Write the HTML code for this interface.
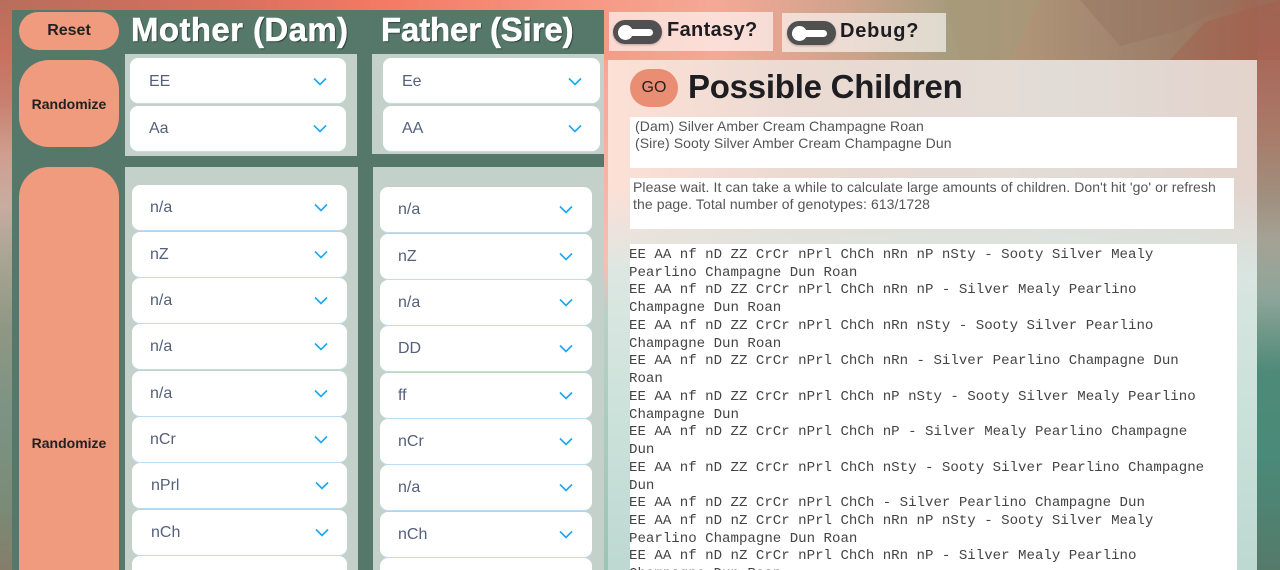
<!DOCTYPE html>
<html><head><meta charset="utf-8"><style>
html,body{margin:0;padding:0;width:1280px;height:570px;overflow:hidden;font-family:"Liberation Sans",sans-serif;background:#8a9a8a}
#root{position:relative;width:1280px;height:570px;overflow:hidden}
.a{position:absolute}
.sel{position:absolute;background:#fff;border-radius:8px;box-shadow:0 1px 0 #bcdcf2;color:#55607a;font-size:16px;line-height:45px;height:45px;box-sizing:border-box;padding-left:18px}
.sel svg{position:absolute;right:19px;top:18px}
.top{padding-left:19px;line-height:46px}
.btn{position:absolute;left:19px;width:100px;background:#f09a7e;color:#222;font-weight:bold;font-size:14px;text-align:center}
.h{position:absolute;color:#fff;font-weight:bold;font-size:33px;top:11px;line-height:38px;text-shadow:1px 1px 1px #233;white-space:nowrap;-webkit-text-stroke:.5px #fff}
.tgl{position:absolute;background:rgba(255,255,255,.62);height:39px;width:164px;font-weight:bold;font-size:20px;letter-spacing:.35px;line-height:37px;color:#1c1c22}
.pill{position:absolute;left:4px;top:8px;width:49px;height:24px;border-radius:12px;background:#505050;box-shadow:0 1px 2px rgba(0,0,0,.25)}
.pill i{position:absolute;left:5px;top:9px;width:35px;height:7px;border-radius:4px;background:#fff}
.pill b{position:absolute;left:5px;top:5px;width:15px;height:15px;border-radius:50%;background:#fff}
.w{position:absolute;background:#fff;color:#555;font-size:14px;line-height:17px;letter-spacing:.085px;white-space:nowrap}
pre{margin:0;font-family:"Liberation Mono",monospace;font-size:14.1px;line-height:17.74px;color:#444;white-space:pre}
</style></head><body><div id="root">
<svg class="a" style="left:0;top:0" width="1280" height="570" viewBox="0 0 1280 570">
<defs>
<linearGradient id="t" x1="0" y1="0" x2="1" y2="0">
<stop offset="0" stop-color="#b86e5c"/><stop offset=".18" stop-color="#d8705e"/><stop offset=".3" stop-color="#f47a64"/><stop offset=".47" stop-color="#f69a86"/><stop offset=".56" stop-color="#f4a996"/><stop offset=".66" stop-color="#cfa38c"/><stop offset=".74" stop-color="#a89c7e"/><stop offset=".8" stop-color="#b09478"/><stop offset=".87" stop-color="#a2866e"/><stop offset=".93" stop-color="#9c7a64"/><stop offset="1" stop-color="#a0604e"/>
</linearGradient>
<linearGradient id="l" x1="0" y1="0" x2="0" y2="1">
<stop offset="0" stop-color="#b86e5c"/><stop offset=".09" stop-color="#c9705f"/><stop offset=".18" stop-color="#c88070"/><stop offset=".27" stop-color="#cf9e8e"/><stop offset=".36" stop-color="#c8aca0"/><stop offset=".45" stop-color="#a9a594"/><stop offset=".58" stop-color="#8e9783"/><stop offset=".72" stop-color="#7d9384"/><stop offset=".88" stop-color="#7a8c78"/><stop offset="1" stop-color="#857d68"/>
</linearGradient>
<linearGradient id="r" x1="0" y1="0" x2="0" y2="1">
<stop offset="0" stop-color="#9c6a58"/><stop offset=".1" stop-color="#a9685a"/><stop offset=".23" stop-color="#a97a68"/><stop offset=".35" stop-color="#a0907f"/><stop offset=".42" stop-color="#a5a295"/><stop offset=".52" stop-color="#8fa59a"/><stop offset=".65" stop-color="#4f8a78"/><stop offset=".8" stop-color="#4a8a78"/><stop offset="1" stop-color="#557a6a"/>
</linearGradient>
<linearGradient id="m" x1="0" y1="0" x2="0" y2="1">
<stop offset="0" stop-color="#f8a590"/><stop offset=".4" stop-color="#f4c0b4"/><stop offset=".5" stop-color="#b8d0c8"/><stop offset="1" stop-color="#9cc4b6"/>
</linearGradient>
</defs>
<rect width="1280" height="60" fill="url(#t)"/>
<rect y="0" width="12" height="570" fill="url(#l)"/>
<rect x="1257" y="0" width="23" height="570" fill="url(#r)"/>
<rect x="604" y="60" width="4" height="510" fill="url(#m)"/>
<polygon points="1170,60 1205,22 1280,0 1280,60" fill="#a3604c" opacity=".45"/>
<polygon points="1080,0 1240,0 1180,30 1120,46" fill="#93715c" opacity=".4"/>
<polygon points="945,0 1040,0 1010,60 960,60" fill="#a59a7a" opacity=".6"/>
</svg>
<div class="a" style="left:12px;top:10px;width:592px;height:560px;background:#56786a"></div>
<div class="a" style="left:125px;top:54px;width:232px;height:102px;background:#c4d1ca"></div>
<div class="a" style="left:372px;top:54px;width:232px;height:100px;background:#c4d1ca"></div>
<div class="a" style="left:125px;top:167px;width:233px;height:403px;background:#c4d1ca"></div>
<div class="a" style="left:373px;top:167px;width:231px;height:403px;background:#c4d1ca"></div>
<div class="btn" style="top:12px;height:38px;border-radius:19px;line-height:38px;font-size:16px">Reset</div>
<div class="btn" style="top:60px;height:87px;border-radius:30px;line-height:88px">Randomize</div>
<div class="btn" style="top:167px;height:403px;border-radius:30px 30px 0 0"><span class="a" style="left:0;width:100px;top:268px;line-height:17px">Randomize</span></div>
<div class="h" style="left:131px;letter-spacing:.4px">Mother (Dam)</div>
<div class="h" style="left:381px;letter-spacing:-.15px">Father (Sire)</div>
<div class="sel top" style="left:130px;top:58px;width:216px;line-height:47px">EE<svg style="top:19px" width="14" height="9" viewBox="0 0 14 9"><path d="M1 1.5 7 7.5 13 1.5" fill="none" stroke="#1aa7ee" stroke-width="1.6"/></svg></div>
<div class="sel top" style="left:130px;top:106px;width:216px">Aa<svg width="14" height="9" viewBox="0 0 14 9"><path d="M1 1.5 7 7.5 13 1.5" fill="none" stroke="#1aa7ee" stroke-width="1.6"/></svg></div>
<div class="sel top" style="left:383px;top:58px;width:217px;line-height:47px">Ee<svg style="right:18px;top:19px" width="14" height="9" viewBox="0 0 14 9"><path d="M1 1.5 7 7.5 13 1.5" fill="none" stroke="#1aa7ee" stroke-width="1.6"/></svg></div>
<div class="sel top" style="left:383px;top:106px;width:217px">AA<svg style="right:18px" width="14" height="9" viewBox="0 0 14 9"><path d="M1 1.5 7 7.5 13 1.5" fill="none" stroke="#1aa7ee" stroke-width="1.6"/></svg></div>
<div class="sel" style="left:132px;top:185px;width:215px">n/a<svg width="14" height="9" viewBox="0 0 14 9"><path d="M1 1.5 7 7.5 13 1.5" fill="none" stroke="#1aa7ee" stroke-width="1.6"/></svg></div>
<div class="sel" style="left:132px;top:232px;width:215px">nZ<svg width="14" height="9" viewBox="0 0 14 9"><path d="M1 1.5 7 7.5 13 1.5" fill="none" stroke="#1aa7ee" stroke-width="1.6"/></svg></div>
<div class="sel" style="left:132px;top:278px;width:215px">n/a<svg width="14" height="9" viewBox="0 0 14 9"><path d="M1 1.5 7 7.5 13 1.5" fill="none" stroke="#1aa7ee" stroke-width="1.6"/></svg></div>
<div class="sel" style="left:132px;top:324px;width:215px">n/a<svg width="14" height="9" viewBox="0 0 14 9"><path d="M1 1.5 7 7.5 13 1.5" fill="none" stroke="#1aa7ee" stroke-width="1.6"/></svg></div>
<div class="sel" style="left:132px;top:371px;width:215px">n/a<svg width="14" height="9" viewBox="0 0 14 9"><path d="M1 1.5 7 7.5 13 1.5" fill="none" stroke="#1aa7ee" stroke-width="1.6"/></svg></div>
<div class="sel" style="left:132px;top:417px;width:215px">nCr<svg width="14" height="9" viewBox="0 0 14 9"><path d="M1 1.5 7 7.5 13 1.5" fill="none" stroke="#1aa7ee" stroke-width="1.6"/></svg></div>
<div class="sel" style="left:132px;top:463px;width:215px;padding-left:19px">nPrl<svg style="right:18px" width="14" height="9" viewBox="0 0 14 9"><path d="M1 1.5 7 7.5 13 1.5" fill="none" stroke="#1aa7ee" stroke-width="1.6"/></svg></div>
<div class="sel" style="left:132px;top:510px;width:215px;padding-left:19px">nCh<svg style="right:18px" width="14" height="9" viewBox="0 0 14 9"><path d="M1 1.5 7 7.5 13 1.5" fill="none" stroke="#1aa7ee" stroke-width="1.6"/></svg></div>
<div class="sel" style="left:132px;top:556px;width:215px;height:14px;border-radius:8px 8px 0 0;box-shadow:none"></div>
<div class="sel" style="left:380px;top:187px;width:212px">n/a<svg width="14" height="9" viewBox="0 0 14 9"><path d="M1 1.5 7 7.5 13 1.5" fill="none" stroke="#1aa7ee" stroke-width="1.6"/></svg></div>
<div class="sel" style="left:380px;top:234px;width:212px">nZ<svg width="14" height="9" viewBox="0 0 14 9"><path d="M1 1.5 7 7.5 13 1.5" fill="none" stroke="#1aa7ee" stroke-width="1.6"/></svg></div>
<div class="sel" style="left:380px;top:280px;width:212px">n/a<svg width="14" height="9" viewBox="0 0 14 9"><path d="M1 1.5 7 7.5 13 1.5" fill="none" stroke="#1aa7ee" stroke-width="1.6"/></svg></div>
<div class="sel" style="left:380px;top:326px;width:212px">DD<svg width="14" height="9" viewBox="0 0 14 9"><path d="M1 1.5 7 7.5 13 1.5" fill="none" stroke="#1aa7ee" stroke-width="1.6"/></svg></div>
<div class="sel" style="left:380px;top:373px;width:212px">ff<svg width="14" height="9" viewBox="0 0 14 9"><path d="M1 1.5 7 7.5 13 1.5" fill="none" stroke="#1aa7ee" stroke-width="1.6"/></svg></div>
<div class="sel" style="left:380px;top:419px;width:212px">nCr<svg width="14" height="9" viewBox="0 0 14 9"><path d="M1 1.5 7 7.5 13 1.5" fill="none" stroke="#1aa7ee" stroke-width="1.6"/></svg></div>
<div class="sel" style="left:380px;top:465px;width:212px">n/a<svg width="14" height="9" viewBox="0 0 14 9"><path d="M1 1.5 7 7.5 13 1.5" fill="none" stroke="#1aa7ee" stroke-width="1.6"/></svg></div>
<div class="sel" style="left:380px;top:512px;width:212px">nCh<svg width="14" height="9" viewBox="0 0 14 9"><path d="M1 1.5 7 7.5 13 1.5" fill="none" stroke="#1aa7ee" stroke-width="1.6"/></svg></div>
<div class="sel" style="left:380px;top:558px;width:212px;height:12px;border-radius:8px 8px 0 0;box-shadow:none"></div>
<div class="tgl" style="left:609px;top:12px"><div class="pill"><i></i><b></b></div><span class="a" style="left:58px;top:0">Fantasy?</span></div>
<div class="tgl" style="left:782px;top:13px"><div class="pill" style="left:5px"><i></i><b></b></div><span class="a" style="left:58px;top:0;letter-spacing:.8px">Debug?</span></div>
<div class="a" style="left:608px;top:60px;width:649px;height:510px;background:linear-gradient(to bottom,rgba(205,228,222,0) 25%,rgba(215,232,228,.85) 42%,rgba(200,226,218,.95) 70%,rgba(190,216,210,1) 100%),linear-gradient(to right,#fde0d6 0,#eadad2 30%,#e2dcd6 70%,#e3d3cc 100%)"></div>
<div class="a" style="left:630px;top:69px;width:48px;height:38px;border-radius:19px;background:#e98e72;color:#222;font-size:16px;text-align:center;line-height:38px">GO</div>
<div class="a" style="left:688px;top:68px;font-size:33px;font-weight:bold;line-height:38px;color:#1d1d22;letter-spacing:-.25px;white-space:nowrap">Possible Children</div>
<div class="w" style="left:630px;top:117px;width:602px;height:51px;padding-left:5px"><div style="padding-top:1px">(Dam) Silver Amber Cream Champagne Roan<br>(Sire) Sooty Silver Amber Cream Champagne Dun</div></div>
<div class="w" style="left:630px;top:178px;width:601px;height:51px;padding-left:3px"><div style="padding-top:1px">Please wait. It can take a while to calculate large amounts of children. Don't hit 'go' or refresh<br>the page. Total number of genotypes: 613/1728</div></div>
<div class="a" style="left:630px;top:244px;width:607px;height:326px;background:#fff;overflow:hidden"><pre style="margin:3px 0 0 -1px;height:323px;overflow:hidden">EE AA nf nD ZZ CrCr nPrl ChCh nRn nP nSty - Sooty Silver Mealy
Pearlino Champagne Dun Roan
EE AA nf nD ZZ CrCr nPrl ChCh nRn nP - Silver Mealy Pearlino
Champagne Dun Roan
EE AA nf nD ZZ CrCr nPrl ChCh nRn nSty - Sooty Silver Pearlino
Champagne Dun Roan
EE AA nf nD ZZ CrCr nPrl ChCh nRn - Silver Pearlino Champagne Dun
Roan
EE AA nf nD ZZ CrCr nPrl ChCh nP nSty - Sooty Silver Mealy Pearlino
Champagne Dun
EE AA nf nD ZZ CrCr nPrl ChCh nP - Silver Mealy Pearlino Champagne
Dun
EE AA nf nD ZZ CrCr nPrl ChCh nSty - Sooty Silver Pearlino Champagne
Dun
EE AA nf nD ZZ CrCr nPrl ChCh - Silver Pearlino Champagne Dun
EE AA nf nD nZ CrCr nPrl ChCh nRn nP nSty - Sooty Silver Mealy
Pearlino Champagne Dun Roan
EE AA nf nD nZ CrCr nPrl ChCh nRn nP - Silver Mealy Pearlino
Champagne Dun Roan</pre></div>
</div></body></html>
